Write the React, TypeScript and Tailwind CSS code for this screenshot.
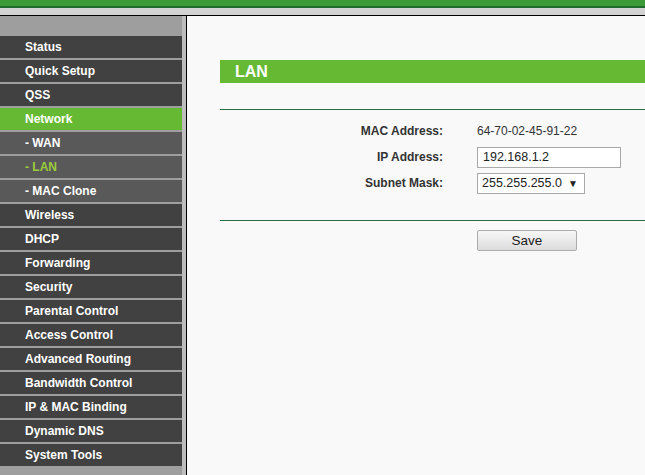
const menu = [
  { label: "Status" },
  { label: "Quick Setup" },
  { label: "QSS" },
  { label: "Network", active: true },
  { label: "- WAN", sub: true },
  { label: "- LAN", sub: true, current: true },
  { label: "- MAC Clone", sub: true },
  { label: "Wireless" },
  { label: "DHCP" },
  { label: "Forwarding" },
  { label: "Security" },
  { label: "Parental Control" },
  { label: "Access Control" },
  { label: "Advanced Routing" },
  { label: "Bandwidth Control" },
  { label: "IP & MAC Binding" },
  { label: "Dynamic DNS" },
  { label: "System Tools" },
];

function Sidebar() {
  return (
    <div className="flex w-[187px] shrink-0 bg-[#9e9e9e]">
      <div className="w-[182px] pt-[20px]">
        {menu.map((item) => {
          let bg = "bg-[#414141]";
          if (item.active) bg = "bg-[#66b933]";
          else if (item.sub) bg = "bg-[#595959]";
          const color = item.current ? "text-[#9ccc3c]" : "text-white";
          return (
            <div
              key={item.label}
              className={`mb-[2px] flex h-[22px] items-center pl-[25px] text-[12px] font-bold ${bg} ${color}`}
            >
              {item.label}
            </div>
          );
        })}
      </div>
      <div className="w-[4px] bg-[#bdbdbd]" />
      <div className="w-[1px] bg-black" />
    </div>
  );
}

function Row({ label, children }: { label: string; children: React.ReactNode }) {
  return (
    <div className="flex h-[26px] items-center">
      <div className="w-[223px] text-right text-[12px] font-bold text-[#333]">{label}</div>
      <div className="ml-[34px] flex items-center">{children}</div>
    </div>
  );
}

function Content() {
  return (
    <div className="flex-1 bg-[#f9f9f9] pl-[33px] pt-[44px]">
      <div className="flex h-[23px] items-center bg-[#66b933] pl-[15px] text-[16px] font-bold text-white">
        LAN
      </div>
      <div className="mt-[26px] h-[1px] bg-[#2a6e44]" />
      <div className="pt-[8px]">
        <Row label="MAC Address:">
          <span className="text-[12px] text-[#333]">64-70-02-45-91-22</span>
        </Row>
        <Row label="IP Address:">
          <div className="flex h-[21px] w-[144px] items-center border border-[#a9a9a9] bg-white pl-[5px] text-[12.5px] text-[#222]">
            192.168.1.2
          </div>
        </Row>
        <Row label="Subnet Mask:">
          <div className="flex h-[21px] w-[108px] items-center justify-between border border-[#a9a9a9] bg-white pl-[4px] pr-[6px] text-[12.5px] text-[#222]">
            <span>255.255.255.0</span>
            <span className="text-[10px]">▼</span>
          </div>
        </Row>
      </div>
      <div className="mt-[24px] h-[1px] bg-[#2a6e44]" />
      <div className="ml-[257px] mt-[7px]">
        <button className="h-[21px] w-[100px] rounded-[2px] border border-[#adadad] bg-gradient-to-b from-[#f7f7f7] to-[#dcdcdc] text-[13.5px] text-[#222]">
          Save
        </button>
      </div>
    </div>
  );
}

export default function App() {
  return (
    <div className="flex h-[475px] w-[645px] flex-col overflow-hidden font-['Liberation_Sans',Arial,sans-serif]">
      <div className="h-[6px] bg-[#3d9b37]" />
      <div className="h-[2px] bg-[#1f6a2f]" />
      <div className="h-[7px] bg-[#d3d3d3]" />
      <div className="h-[1px] bg-black" />
      <div className="flex flex-1">
        <Sidebar />
        <Content />
      </div>
    </div>
  );
}
